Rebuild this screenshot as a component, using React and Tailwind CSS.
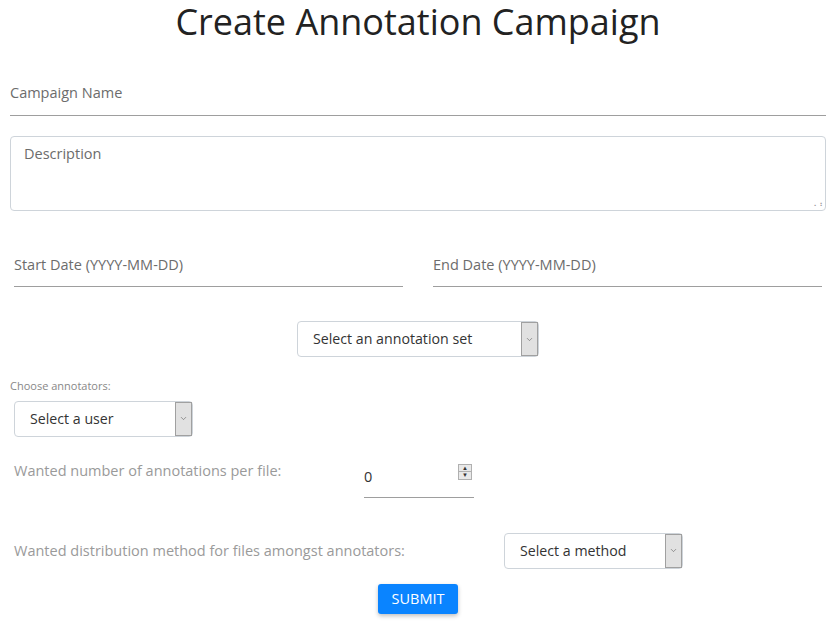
import { ChevronDown } from 'lucide-react';

function Select({ label, className = '' }) {
  return (
    <div
      className={`flex h-[36px] items-stretch rounded-[4px] border border-[#ced4da] bg-white ${className}`}
    >
      <span className="flex flex-1 items-center pl-[15px] text-[14.2px] text-[#333]">{label}</span>
      <span className="flex w-[17px] items-center justify-center border border-[#a0a0a0] bg-[#e1e1e1]">
        <ChevronDown className="h-[9px] w-[9px] text-[#555]" strokeWidth={1.5} />
      </span>
    </div>
  );
}

function UnderlineField({ label, className = '' }) {
  return (
    <div className={`flex h-[34px] items-start border-b border-[#9e9e9e] pt-[2px] ${className}`}>
      <span className="text-[14.5px] leading-[20px] text-[#6c6c6c]">{label}</span>
    </div>
  );
}

export default function App() {
  return (
    <div className="w-[836px] bg-white font-['Open_Sans',sans-serif]">
      <h1 className="text-center text-[36px] leading-[44px] text-[#222]">Create Annotation Campaign</h1>

      <div className="mt-[30px] px-[10px]">
        <div className="flex h-[42px] items-start border-b border-[#9e9e9e] pt-[9px]">
          <span className="text-[14.5px] leading-[20px] text-[#6c6c6c]">Campaign Name</span>
        </div>

        <div className="relative mt-[20px] h-[75px] rounded-[4px] border border-[#ced4da] px-[13px] pt-[4px]">
          <span className="text-[14.5px] leading-[20px] text-[#6c6c6c]">Description</span>
          <span className="absolute bottom-[2px] right-[2px] text-[8px] leading-none text-[#999]">⠠⠰</span>
        </div>
      </div>

      <div className="mt-[42px] flex gap-[30px] px-[14px]">
        <UnderlineField label="Start Date (YYYY-MM-DD)" className="flex-1" />
        <UnderlineField label="End Date (YYYY-MM-DD)" className="flex-1" />
      </div>

      <div className="mt-[34px] flex justify-center">
        <Select label="Select an annotation set" className="w-[242px]" />
      </div>

      <p className="mt-[21px] pl-[10px] text-[11px] text-[#888]">Choose annotators:</p>
      <div className="mt-[6px] pl-[14px]">
        <Select label="Select a user" className="w-[179px]" />
      </div>

      <div className="mt-[21px] flex pl-[14px]">
        <span className="w-[350px] pt-[3px] text-[14.5px] leading-[20px] text-[#9a9a9a]">
          Wanted number of annotations per file:
        </span>
        <div className="flex h-[40px] w-[110px] items-start justify-between border-b border-[#9e9e9e] pt-[9px]">
          <span className="text-[14.5px] leading-[20px] text-[#333]">0</span>
          <span className="-mt-[3px] mr-[2px] flex h-[16px] w-[14px] flex-col border border-[#b0b0b0] bg-[#e9e9e9]">
            <span className="flex flex-1 items-center justify-center text-[6px] leading-none text-[#333]">▲</span>
            <span className="flex flex-1 items-center justify-center border-t border-[#b0b0b0] text-[6px] leading-none text-[#333]">
              ▼
            </span>
          </span>
        </div>
      </div>

      <div className="mt-[35px] flex items-center pl-[14px]">
        <span className="w-[490px] text-[14.5px] text-[#9a9a9a]">
          Wanted distribution method for files amongst annotators:
        </span>
        <Select label="Select a method" className="w-[179px]" />
      </div>

      <div className="mt-[15px] flex justify-center pb-[15px]">
        <button
          type="button"
          className="h-[30px] w-[80px] rounded-[3px] bg-[#0a84ff] text-[14.5px] text-white shadow-[0_2px_4px_rgba(0,0,0,0.25)]"
        >
          SUBMIT
        </button>
      </div>
    </div>
  );
}
